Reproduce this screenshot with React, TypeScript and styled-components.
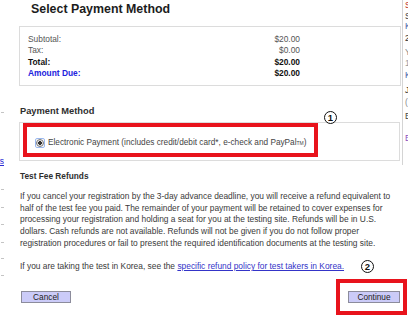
import React from 'react';
import styled, { createGlobalStyle } from 'styled-components';

const GlobalStyle = createGlobalStyle`
  html, body {
    margin: 0;
    padding: 0;
    background: #ffffff;
  }
  body {
    font-family: "Liberation Sans", Arial, sans-serif;
    color: #333333;
  }
`;

const Page = styled.div`
  display: flex;
  align-items: flex-start;
  width: 408px;
  height: 319px;
  overflow: hidden;
`;

const LeftRail = styled.div`
  flex: none;
  width: 4px;
  display: flex;
  flex-direction: column;
  align-items: flex-end;
  overflow: hidden;
`;

const RailMark = styled.div<{ $top: number }>`
  margin-top: ${p => p.$top}px;
  width: 3px;
  height: 1px;
  background: #c4c4c4;
`;

const RailLink = styled.span<{ $top: number }>`
  margin-top: ${p => p.$top}px;
  font-size: 8.5px;
  line-height: 10px;
  color: #2b2bd4;
  text-decoration: underline;
  white-space: nowrap;
`;

const Main = styled.div`
  flex: none;
  width: 383px;
  margin-left: 15px;
  display: flex;
  flex-direction: column;
`;

const RightRail = styled.div`
  flex: 1;
  height: 165px;
  border-left: 1px solid #d4d4d4;
  padding-left: 2px;
  display: flex;
  flex-direction: column;
  overflow: hidden;
`;

const RailText = styled.span<{ $color: string; $top: number }>`
  margin-top: ${p => p.$top}px;
  font-size: 8.5px;
  line-height: 10px;
  color: ${p => p.$color};
  white-space: nowrap;
`;

const Title = styled.h1`
  margin: 2px 0 10px 12px;
  font-size: 12.4px;
  line-height: 14px;
  font-weight: 700;
  color: #1c1c1c;
`;

const SummaryBox = styled.div`
  width: 382px;
  box-sizing: border-box;
  border: 1px solid #dcdcdc;
  padding: 7px 0 6px 8px;
`;

const SummaryTable = styled.div`
  width: 272px;
  display: grid;
  grid-template-columns: 1fr auto;
`;

const Cell = styled.span<{ $tone: 'muted' | 'strong' | 'due'; $right?: boolean }>`
  font-size: 8.4px;
  line-height: 11.3px;
  text-align: ${p => (p.$right ? 'right' : 'left')};
  font-weight: ${p => (p.$tone === 'muted' ? 400 : 700)};
  color: ${p => (p.$tone === 'muted' ? '#555555' : p.$tone === 'due' && !p.$right ? '#2222dd' : '#111111')};
`;

const SectionTitle = styled.h2<{ $size: number; $top: number }>`
  margin: ${p => p.$top}px 0 0 1px;
  font-size: ${p => p.$size}px;
  line-height: 12px;
  font-weight: 700;
  color: #2e2e2e;
`;

const MethodSection = styled.div`
  position: relative;
  margin-top: 5px;
`;

const MethodBox = styled.div`
  width: 381px;
  box-sizing: border-box;
  border: 1px solid #dcdcdc;
  padding: 0 3px 3px 3px;
`;

const Highlight = styled.div<{ $pad: string }>`
  display: inline-flex;
  align-items: center;
  box-sizing: border-box;
  border: 4px solid #e8131c;
  padding: ${p => p.$pad};
`;

const MethodOption = styled.label`
  display: flex;
  align-items: center;
  height: 12px;
  font-size: 8.25px;
  line-height: 12px;
  color: #444444;
  white-space: nowrap;
`;

const RadioFocus = styled.span`
  flex: none;
  width: 10px;
  height: 10px;
  box-sizing: border-box;
  border: 1px solid #9ab8ee;
  border-radius: 2px;
  display: flex;
  align-items: center;
  justify-content: center;
  margin-right: 3px;
`;

const RadioDot = styled.span`
  width: 8px;
  height: 8px;
  box-sizing: border-box;
  border-radius: 50%;
  border: 1px solid #7a7a7a;
  background: radial-gradient(circle, #333 0 1.6px, #e4e4e4 2px);
`;

const Sup = styled.sup`
  font-size: 5px;
  line-height: 0;
  vertical-align: 3px;
`;

const StepMark = styled.span<{ $left: number; $top: number }>`
  position: absolute;
  left: ${p => p.$left}px;
  top: ${p => p.$top}px;
  width: 13px;
  height: 13px;
  box-sizing: border-box;
  border: 1.5px solid #111111;
  border-radius: 50%;
  background: #ffffff;
  display: flex;
  align-items: center;
  justify-content: center;
  font-size: 9.5px;
  font-weight: 700;
  color: #111111;
`;

const Paragraph = styled.p<{ $top: number }>`
  margin: ${p => p.$top}px 0 0 1px;
  width: 375px;
  font-size: 8.4px;
  line-height: 11.6px;
  color: #3a3a3a;
`;

const PolicyLink = styled.a`
  color: #3434c8;
  text-decoration: underline;
`;

const ButtonRow = styled.div`
  display: flex;
  justify-content: space-between;
  align-items: center;
  margin: 6px -5px 0 2px;
`;

const FormButton = styled.button`
  height: 12px;
  box-sizing: border-box;
  padding: 0;
  border: 1px solid #8c8c9c;
  background: #cbcbf8;
  font-family: "Liberation Sans", Arial, sans-serif;
  font-size: 8.3px;
  line-height: 10px;
  color: #222222;
`;

const CancelButton = styled(FormButton)`
  width: 50px;
`;

const ContinueButton = styled(FormButton)`
  width: 52px;
`;

const ContinueWrap = styled.div`
  position: relative;
`;

const summary = [
  { label: 'Subtotal:', value: '$20.00', tone: 'muted' as const },
  { label: 'Tax:', value: '$0.00', tone: 'muted' as const },
  { label: 'Total:', value: '$20.00', tone: 'strong' as const },
  { label: 'Amount Due:', value: '$20.00', tone: 'due' as const },
];

const rightFragments = [
  { text: 'S', color: '#c0392b', top: 0 },
  { text: 'S', color: '#444', top: 1 },
  { text: 'K', color: '#3a5aa8', top: 0 },
  { text: '2', color: '#333', top: 2 },
  { text: 'Y', color: '#888', top: 4 },
  { text: '1', color: '#999', top: 1 },
  { text: 'K', color: '#3a5aa8', top: 2 },
  { text: 'J', color: '#333', top: 5 },
  { text: '(', color: '#888', top: 2 },
  { text: 'E', color: '#444', top: 4 },
  { text: 'E', color: '#8a4fc0', top: 12 },
];

const leftMarks = [23, 17, 16, 17, 15, 16];

const App: React.FC = () => {
  return (
    <>
      <GlobalStyle />
      <Page>
        <LeftRail>
          <RailMark $top={112} />
          <RailLink $top={43}>s</RailLink>
          {leftMarks.map((gap, i) => (
            <RailMark key={i} $top={gap} />
          ))}
        </LeftRail>

        <Main>
          <Title>Select Payment Method</Title>

          <SummaryBox>
            <SummaryTable>
              {summary.map(row => (
                <React.Fragment key={row.label}>
                  <Cell $tone={row.tone}>{row.label}</Cell>
                  <Cell $tone={row.tone} $right>{row.value}</Cell>
                </React.Fragment>
              ))}
            </SummaryTable>
          </SummaryBox>

          <SectionTitle $size={9.3} $top={19}>Payment Method</SectionTitle>
          <MethodSection>
            <MethodBox>
              <Highlight $pad="10px 7px 4px 8px">
                <MethodOption>
                  <RadioFocus>
                    <RadioDot />
                  </RadioFocus>
                  Electronic Payment (includes credit/debit card*, e-check and PayPal<Sup>TM</Sup>)
                </MethodOption>
              </Highlight>
            </MethodBox>
            <StepMark $left={305} $top={-11}>1</StepMark>
          </MethodSection>

          <SectionTitle $size={8.3} $top={9}>Test Fee Refunds</SectionTitle>
          <Paragraph $top={9}>
            If you cancel your registration by the 3-day advance deadline, you will receive a refund equivalent to
            half of the test fee you paid. The remainder of your payment will be retained to cover expenses for
            processing your registration and holding a seat for you at the testing site. Refunds will be in U.S.
            dollars. Cash refunds are not available. Refunds will not be given if you do not follow proper
            registration procedures or fail to present the required identification documents at the testing site.
          </Paragraph>
          <Paragraph $top={12}>
            If you are taking the test in Korea, see the{' '}
            <PolicyLink href="#">specific refund policy for test takers in Korea.</PolicyLink>
          </Paragraph>

          <ButtonRow>
            <CancelButton type="button">Cancel</CancelButton>
            <ContinueWrap>
              <Highlight $pad="8px 3px 8px 8px">
                <ContinueButton type="button">Continue</ContinueButton>
              </Highlight>
              <StepMark $left={25} $top={-19}>2</StepMark>
            </ContinueWrap>
          </ButtonRow>
        </Main>

        <RightRail>
          {rightFragments.map((f, i) => (
            <RailText key={i} $color={f.color} $top={f.top}>
              {f.text}
            </RailText>
          ))}
        </RightRail>
      </Page>
    </>
  );
};

export default App;
